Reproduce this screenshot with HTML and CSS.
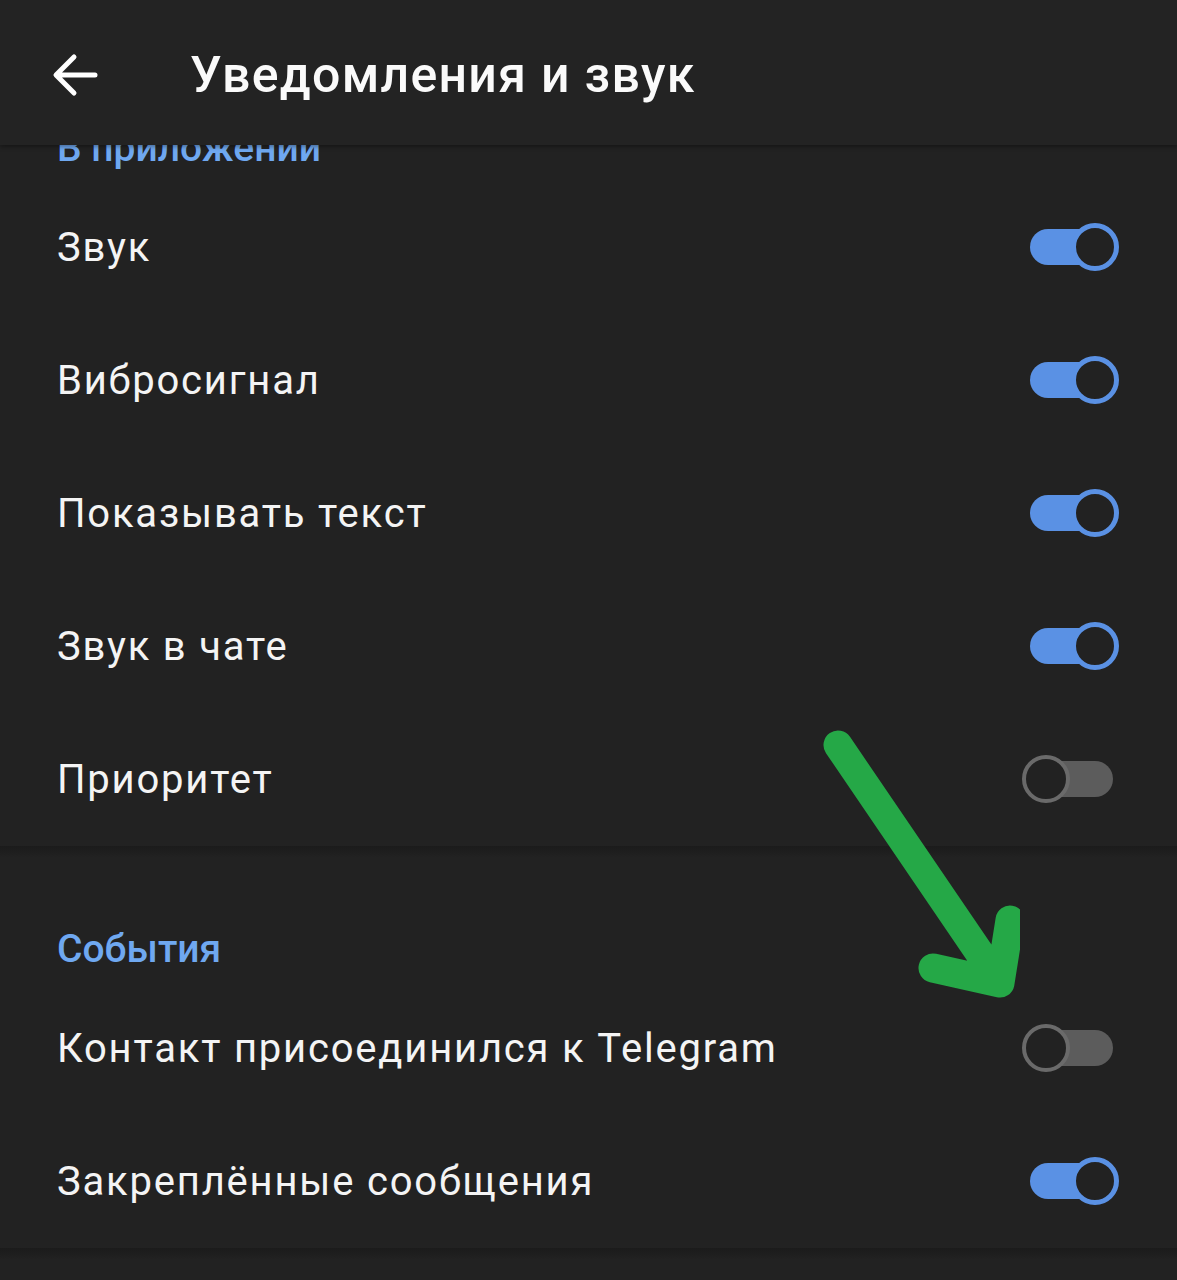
FILE: index.html
```html
<!DOCTYPE html>
<html lang="ru">
<head>
<meta charset="utf-8">
<link rel="stylesheet" href="styles.css">
<title>Уведомления и звук</title>
</head>
<body>
<div class="screen">
  <header class="topbar">
    <svg class="back" width="46" height="44" viewBox="0 0 46 44" aria-hidden="true">
      <path d="M43 22 H5 M22 4 L4 22 L22 40" fill="none" stroke="#fff" stroke-width="5" stroke-linecap="round" stroke-linejoin="round"/>
    </svg>
    <h1 class="title">Уведомления и звук</h1>
  </header>

  <section class="section first">
    <div class="section-label clipped"><span>В приложении</span></div>
    <div class="row"><span class="label">Звук</span><span class="toggle on"></span></div>
    <div class="row"><span class="label">Вибросигнал</span><span class="toggle on"></span></div>
    <div class="row"><span class="label">Показывать текст</span><span class="toggle on"></span></div>
    <div class="row"><span class="label">Звук в чате</span><span class="toggle on"></span></div>
    <div class="row"><span class="label">Приоритет</span><span class="toggle off"></span></div>
  </section>
  <div class="divider"></div>
  <section class="section">
    <div class="section-label"><span>События</span></div>
    <div class="row"><span class="label">Контакт присоединился к Telegram</span><span class="toggle off"></span></div>
    <div class="row"><span class="label">Закреплённые сообщения</span><span class="toggle on"></span></div>
  </section>
  <div class="divider"></div>

  <svg class="annot" width="220" height="300" viewBox="0 0 220 300" aria-hidden="true">
    <path d="M38 25 L200 263 M133 248 L200 263 L210 200" fill="none" stroke="#25a847" stroke-width="29" stroke-linecap="round" stroke-linejoin="round"/>
  </svg>
</div>
</body>
</html>
```
FILE: styles.css
```css
* { box-sizing: border-box; }
html, body { margin: 0; padding: 0; background: #222222; }
body { font-family: Roboto, "Noto Sans", sans-serif; color: #f4f4f4; }

.screen {
  position: relative;
  width: 1177px;
  height: 1280px;
  overflow: hidden;
  background: #222222;
}

.topbar {
  position: relative;
  z-index: 2;
  height: 145px;
  display: flex;
  align-items: center;
  padding-left: 52px;
  padding-top: 4px;
  background: #232323;
  box-shadow: 0 2px 4px rgba(0,0,0,0.35);
}
.back { display: block; flex: none; }
.title {
  margin: 0 0 0 92px;
  font-size: 50px;
  font-weight: 500;
  color: #fafafa;
  letter-spacing: 1.3px;
}

.section-label {
  height: 124px;
  display: flex;
  align-items: flex-end;
  padding: 0 0 10px 57px;
  font-size: 39px;
  font-weight: 500;
  color: #6fa8f0;
  overflow: hidden;
}
.section-label.clipped { height: 35.5px; }

.row {
  height: 133px;
  display: flex;
  align-items: center;
  justify-content: space-between;
  padding: 0 58px 0 57px;
}
.label { font-size: 40px; font-weight: 400; letter-spacing: 1.8px; }

.toggle {
  position: relative;
  width: 97px;
  height: 50px;
  flex: none;
}
.toggle::before {
  content: "";
  position: absolute;
  left: 8px; right: 8px; top: 7px; bottom: 7px;
  border-radius: 18px;
}
.toggle::after {
  content: "";
  position: absolute;
  top: 1px;
  width: 48px; height: 48px;
  border-radius: 50%;
  background: #222222;
  box-sizing: border-box;
}
.toggle.on::before { background: #5a91e4; }
.toggle.on::after { right: 0; border: 5px solid #5a91e4; }
.toggle.off::before { background: #5c5c5c; right: 6px; }
.toggle.off::after { left: 0; border: 4px solid #6a6a6a; }

.divider {
  height: 12px;
  background: linear-gradient(#1b1b1b, #222222);
}

.annot {
  position: absolute;
  left: 800px;
  top: 720px;
  z-index: 3;
}
```
